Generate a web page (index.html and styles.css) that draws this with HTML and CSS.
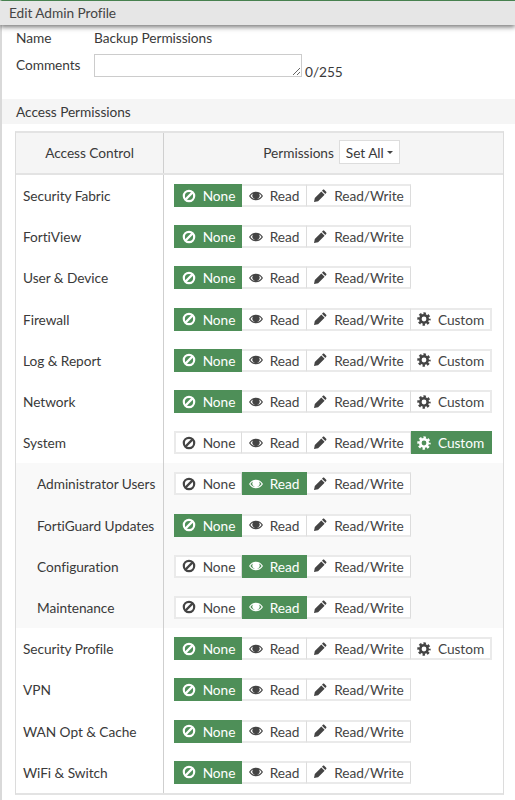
FILE: index.html
```html
<!DOCTYPE html>
<html lang="en">
<head>
<meta charset="utf-8">
<title>Edit Admin Profile</title>
<link rel="stylesheet" href="styles.css">
</head>
<body>
<svg class="defs" width="0" height="0" aria-hidden="true">
  <symbol id="i-none" viewBox="0 0 14 14"><circle cx="7" cy="7" r="5.2" fill="none" stroke="currentColor" stroke-width="2.2"/><path d="M3.4 10.6 10.6 3.4" stroke="currentColor" stroke-width="2.2"/></symbol>
  <symbol id="i-read" viewBox="0 0 14 14"><path fill="currentColor" fill-rule="evenodd" d="M0 7C1.6 4.2 4.1 2.7 7 2.7S12.400 4.200 14 7C12.400 9.800 9.900 11.300 7 11.300S1.600 9.800 0 7ZM1.400 7C2.700 8.900 4.700 10.200 7 10.200S11.300 8.900 12.600 7C11.900 5.900 11 5 9.900 4.400A3.600 3.600 0 1 1 4.100 4.400C3 5 2.100 5.900 1.400 7Z"/><circle cx="6" cy="5.600" r="1" fill="currentColor"/></symbol>
  <symbol id="i-rw" viewBox="0 0 14 14"><path fill="currentColor" d="M1 13 1.800 8.900 8.300 2.400 11.600 5.700 5.100 12.200ZM9 1.700 9.900.8C10.300.4 10.800.4 11.200.8L13.200 2.800C13.600 3.200 13.600 3.700 13.200 4.100L12.300 5Z"/></symbol>
  <symbol id="i-custom" viewBox="0 0 14 14"><circle cx="7" cy="7" r="3.700" fill="none" stroke="currentColor" stroke-width="2.600"/><circle cx="7" cy="7" r="5.500" fill="none" stroke="currentColor" stroke-width="2.400" stroke-dasharray="2.400 1.920" stroke-dashoffset="1.200"/></symbol>
</svg>

<div class="page">
  <header class="titlebar">Edit Admin Profile</header>
  <div class="form-row name-row"><span class="label">Name</span><span>Backup Permissions</span></div>
  <div class="form-row comment-row">
    <span class="label">Comments</span>
    <textarea class="comment-box" aria-label="Comments"></textarea>
    <span class="count">0/255</span>
  </div>
  <div class="section">Access Permissions</div>

  <div class="table">
    <div class="row head">
      <div class="c1">Access Control</div>
      <div class="c2">Permissions <span class="setall">Set All<i class="caret"></i></span></div>
    </div>

    <div class="row"><div class="c1">Security Fabric</div><div class="c2"><div class="group">
      <span class="btn b-none on"><svg class="ic"><use href="#i-none"/></svg>None</span><span class="btn b-read"><svg class="ic"><use href="#i-read"/></svg>Read</span><span class="btn b-rw"><svg class="ic"><use href="#i-rw"/></svg>Read/Write</span>
    </div></div></div>
    <div class="row"><div class="c1">FortiView</div><div class="c2"><div class="group">
      <span class="btn b-none on"><svg class="ic"><use href="#i-none"/></svg>None</span><span class="btn b-read"><svg class="ic"><use href="#i-read"/></svg>Read</span><span class="btn b-rw"><svg class="ic"><use href="#i-rw"/></svg>Read/Write</span>
    </div></div></div>
    <div class="row"><div class="c1">User &amp; Device</div><div class="c2"><div class="group">
      <span class="btn b-none on"><svg class="ic"><use href="#i-none"/></svg>None</span><span class="btn b-read"><svg class="ic"><use href="#i-read"/></svg>Read</span><span class="btn b-rw"><svg class="ic"><use href="#i-rw"/></svg>Read/Write</span>
    </div></div></div>
    <div class="row"><div class="c1">Firewall</div><div class="c2"><div class="group">
      <span class="btn b-none on"><svg class="ic"><use href="#i-none"/></svg>None</span><span class="btn b-read"><svg class="ic"><use href="#i-read"/></svg>Read</span><span class="btn b-rw"><svg class="ic"><use href="#i-rw"/></svg>Read/Write</span><span class="btn b-custom"><svg class="ic"><use href="#i-custom"/></svg>Custom</span>
    </div></div></div>
    <div class="row"><div class="c1">Log &amp; Report</div><div class="c2"><div class="group">
      <span class="btn b-none on"><svg class="ic"><use href="#i-none"/></svg>None</span><span class="btn b-read"><svg class="ic"><use href="#i-read"/></svg>Read</span><span class="btn b-rw"><svg class="ic"><use href="#i-rw"/></svg>Read/Write</span><span class="btn b-custom"><svg class="ic"><use href="#i-custom"/></svg>Custom</span>
    </div></div></div>
    <div class="row"><div class="c1">Network</div><div class="c2"><div class="group">
      <span class="btn b-none on"><svg class="ic"><use href="#i-none"/></svg>None</span><span class="btn b-read"><svg class="ic"><use href="#i-read"/></svg>Read</span><span class="btn b-rw"><svg class="ic"><use href="#i-rw"/></svg>Read/Write</span><span class="btn b-custom"><svg class="ic"><use href="#i-custom"/></svg>Custom</span>
    </div></div></div>
    <div class="row"><div class="c1">System</div><div class="c2"><div class="group">
      <span class="btn b-none"><svg class="ic"><use href="#i-none"/></svg>None</span><span class="btn b-read"><svg class="ic"><use href="#i-read"/></svg>Read</span><span class="btn b-rw"><svg class="ic"><use href="#i-rw"/></svg>Read/Write</span><span class="btn b-custom on"><svg class="ic"><use href="#i-custom"/></svg>Custom</span>
    </div></div></div>

    <div class="row sub"><div class="c1">Administrator Users</div><div class="c2"><div class="group">
      <span class="btn b-none"><svg class="ic"><use href="#i-none"/></svg>None</span><span class="btn b-read on"><svg class="ic"><use href="#i-read"/></svg>Read</span><span class="btn b-rw"><svg class="ic"><use href="#i-rw"/></svg>Read/Write</span>
    </div></div></div>
    <div class="row sub"><div class="c1">FortiGuard Updates</div><div class="c2"><div class="group">
      <span class="btn b-none on"><svg class="ic"><use href="#i-none"/></svg>None</span><span class="btn b-read"><svg class="ic"><use href="#i-read"/></svg>Read</span><span class="btn b-rw"><svg class="ic"><use href="#i-rw"/></svg>Read/Write</span>
    </div></div></div>
    <div class="row sub"><div class="c1">Configuration</div><div class="c2"><div class="group">
      <span class="btn b-none"><svg class="ic"><use href="#i-none"/></svg>None</span><span class="btn b-read on"><svg class="ic"><use href="#i-read"/></svg>Read</span><span class="btn b-rw"><svg class="ic"><use href="#i-rw"/></svg>Read/Write</span>
    </div></div></div>
    <div class="row sub"><div class="c1">Maintenance</div><div class="c2"><div class="group">
      <span class="btn b-none"><svg class="ic"><use href="#i-none"/></svg>None</span><span class="btn b-read on"><svg class="ic"><use href="#i-read"/></svg>Read</span><span class="btn b-rw"><svg class="ic"><use href="#i-rw"/></svg>Read/Write</span>
    </div></div></div>

    <div class="row"><div class="c1">Security Profile</div><div class="c2"><div class="group">
      <span class="btn b-none on"><svg class="ic"><use href="#i-none"/></svg>None</span><span class="btn b-read"><svg class="ic"><use href="#i-read"/></svg>Read</span><span class="btn b-rw"><svg class="ic"><use href="#i-rw"/></svg>Read/Write</span><span class="btn b-custom"><svg class="ic"><use href="#i-custom"/></svg>Custom</span>
    </div></div></div>
    <div class="row"><div class="c1">VPN</div><div class="c2"><div class="group">
      <span class="btn b-none on"><svg class="ic"><use href="#i-none"/></svg>None</span><span class="btn b-read"><svg class="ic"><use href="#i-read"/></svg>Read</span><span class="btn b-rw"><svg class="ic"><use href="#i-rw"/></svg>Read/Write</span>
    </div></div></div>
    <div class="row"><div class="c1">WAN Opt &amp; Cache</div><div class="c2"><div class="group">
      <span class="btn b-none on"><svg class="ic"><use href="#i-none"/></svg>None</span><span class="btn b-read"><svg class="ic"><use href="#i-read"/></svg>Read</span><span class="btn b-rw"><svg class="ic"><use href="#i-rw"/></svg>Read/Write</span>
    </div></div></div>
    <div class="row"><div class="c1">WiFi &amp; Switch</div><div class="c2"><div class="group">
      <span class="btn b-none on"><svg class="ic"><use href="#i-none"/></svg>None</span><span class="btn b-read"><svg class="ic"><use href="#i-read"/></svg>Read</span><span class="btn b-rw"><svg class="ic"><use href="#i-rw"/></svg>Read/Write</span>
    </div></div></div>
  </div>
</div>
</body>
</html>
```
FILE: styles.css
```css
* { box-sizing: border-box; }
html, body { margin: 0; height: 100%; overflow: hidden; }
body { background: #fff; color: #3a3a3a; font: 13.7px/17px Lato, sans-serif; letter-spacing: -.05px; }
.defs { position: absolute; }
.page { height: 800px; border-left: 2px solid #d9d9d9; border-top: 1px solid #4f8f58; }
.titlebar {
  height: 24px; margin-left: -2px; padding: 3px 0 0 9px;
  background: #e6e6e6; box-shadow: 0 2px 5px rgba(0,0,0,.55);
  color: #444; position: relative;
}
.form-row { display: flex; padding-left: 14px; }
.label { width: 78px; flex: none; }
.name-row { margin-top: 4px; height: 23px; }
.comment-row { height: 47px; align-items: flex-start; }
.comment-row .label { margin-top: 4px; }
.comment-box {
  width: 208px; height: 23px; margin: 2px 0 0; padding: 2px;
  border: 1px solid #ccc; background: #fff; display: block; resize: both; outline: 0;
}
.count { margin: 11px 0 0 3px; }
.section { height: 25px; padding: 4px 0 0 14px; background: #f5f5f5; }
.table { margin: 7px 0 0 13px; width: 489px; border: 1px solid #dcdcdc; border-top: 2px solid #e3e3e3; border-bottom: 2px solid #e3e3e3; }
.row { display: grid; grid-template-columns: 148px 1fr; height: 41.2px; }
.c1 { display: flex; align-items: center; padding-left: 7px; border-right: 1px solid #cfcfcf; }
.c2 { display: flex; align-items: center; padding-left: 10px; }
.head { height: 42px; background: #f5f5f5; border-bottom: 2px solid #e3e3e3; }
.head .c1 { justify-content: center; padding: 0 0 2px; }
.head .c2 { justify-content: center; gap: 5px; padding: 0 4px 2px 0; }
.setall { display: flex; align-items: center; height: 24px; padding: 0 6px; background: #fff; border: 1px solid #ddd; }
.caret { width: 0; height: 0; margin-left: 3px; border: 3px solid transparent; border-top-color: #444; border-bottom: 0; }
.sub { background: #f9f9f9; }
.sub .c1 { padding-left: 21px; white-space: nowrap; }
.group { display: flex; height: 23px; }
.btn {
  display: flex; align-items: center; justify-content: center; gap: 7px;
  height: 23px; background: #fff; color: #444;
  border: 2px solid #eaeaea; border-left: 0; border-right: 1px solid #dcdcdc;
}
.b-none { width: 68px; border-left: 2px solid #eaeaea; }
.b-read { width: 65px; }
.b-rw { width: 104px; }
.b-custom { width: 81px; border-right: 2px solid #eaeaea; }
.btn.on { background: #4e8f58; border-color: #4e8f58; color: #fff; }
.ic { width: 14px; height: 14px; flex: none; }
```
